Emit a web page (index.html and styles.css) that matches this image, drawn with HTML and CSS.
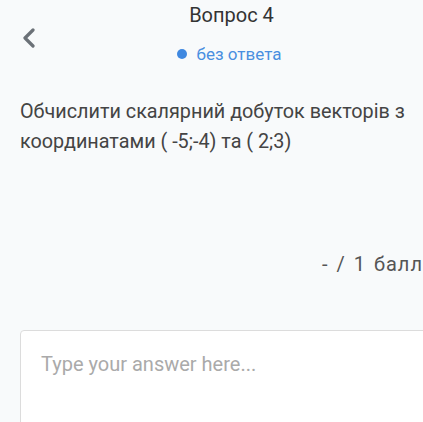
FILE: index.html
```html
<!DOCTYPE html>
<html lang="uk">
<head>
<meta charset="utf-8">
<link rel="stylesheet" href="styles.css">
</head>
<body>
<div class="page">
  <header class="header">
    <button class="back" aria-label="Назад">
      <svg width="14" height="20" viewBox="0 0 14 20"><path d="M11 2 L3 10 L11 18" fill="none" stroke="#6b7177" stroke-width="3.2" stroke-linecap="round" stroke-linejoin="round"/></svg>
    </button>
    <div class="title">Вопрос 4</div>
    <div class="status"><span class="dot"></span>без ответа</div>
  </header>
  <p class="question">Обчислити скалярний добуток векторів з координатами ( -5;-4) та ( 2;3)</p>
  <div class="score">- / 1 балл</div>
  <div class="answer-wrap">
    <textarea class="answer" placeholder="Type your answer here..."></textarea>
  </div>
</div>
</body>
</html>
```
FILE: styles.css
```css
html, body { margin: 0; padding: 0; }
body {
  background: #f8fafb;
  font-family: Roboto, "Noto Sans", sans-serif;
  overflow: hidden;
  width: 423px;
  height: 422px;
}
.page { padding: 0 0 0 20px; overflow: hidden; height: 422px; }
.header {
  position: relative;
  height: 70px;
  display: flex;
  flex-direction: column;
  align-items: center;
  margin-left: -20px;
}
.back {
  position: absolute;
  left: 20px;
  top: 28px;
  border: 0;
  background: none;
  padding: 0;
  width: 18px;
  height: 22px;
}
.title {
  margin-top: 2px;
  font-size: 20px;
  line-height: 26px;
  color: #333;
  padding-left: 40px;
}
.status {
  margin-top: 15px;
  font-size: 17px;
  line-height: 22px;
  color: #4a8fe0;
  display: flex;
  align-items: center;
  gap: 10px;
  padding-left: 35px;
}
.dot { width: 10px; height: 10px; border-radius: 50%; background: #3f88e0; }
.question {
  margin: 27px 0 0;
  padding-right: 10px;
  font-size: 19.8px;
  line-height: 30px;
  color: #444;
}
.score {
  margin-top: 94px;
  padding-left: 302px;
  white-space: nowrap;
  font-size: 20px;
  line-height: 26px;
  letter-spacing: 1px;
  word-spacing: 2px;
  color: #555;
}
.answer-wrap { margin-top: 53px; overflow: hidden; }
.answer {
  display: block;
  width: 430px;
  height: 120px;
  box-sizing: border-box;
  border: 1px solid #dcdcdc;
  border-radius: 4px;
  background: #fff;
  padding: 21px 20px 19px;
  font-family: Roboto, sans-serif;
  font-size: 20px;
  resize: none;
}
.answer::placeholder { color: #aaa; }
```
